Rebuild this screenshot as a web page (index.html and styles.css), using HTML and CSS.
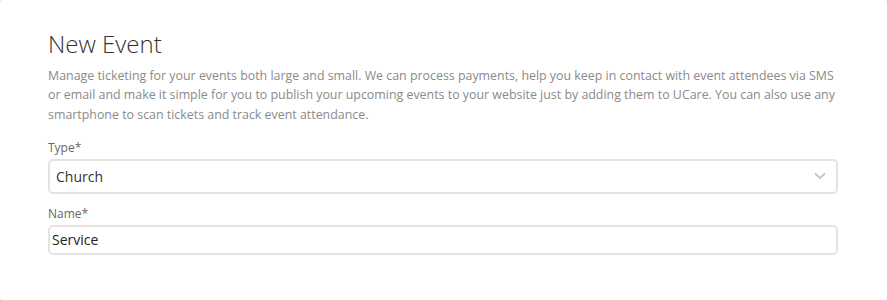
FILE: index.html
```html
<!DOCTYPE html>
<html>
<head>
<meta charset="utf-8">
<link rel="stylesheet" href="styles.css">
</head>
<body>
<div class="card">
  <h1 class="title">New Event</h1>
  <p class="desc">Manage ticketing for your events both large and small. We can process payments, help you keep in contact with event attendees via SMS or email and make it simple for you to publish your upcoming events to your website just by adding them to UCare. You can also use any smartphone to scan tickets and track event attendance.</p>
  <div class="field">
    <label class="label">Type*</label>
    <div class="select">
      <span class="value">Church</span>
      <svg class="chev" width="12" height="8" viewBox="0 0 12 8"><path d="M1 1.5 L6 6 L11 1.5" fill="none" stroke="#c4c4c4" stroke-width="1.8"/></svg>
    </div>
  </div>
  <div class="field">
    <label class="label">Name*</label>
    <div class="input">Service</div>
  </div>
</div>
</body>
</html>
```
FILE: styles.css
```css
html, body {
  margin: 0;
  padding: 0;
  background: #eeeeee;
}
body {
  font-family: "Open Sans", "Noto Sans", sans-serif;
}
.card {
  background: #fff;
  border-radius: 4px;
  height: 300px;
  box-sizing: border-box;
  padding: 28px 49px 0 48px;
}
.title {
  margin: 0;
  font-weight: 300;
  font-size: 24px;
  line-height: 32px;
  color: #333;
}
.desc {
  margin: 6px 0 0;
  font-size: 12.4px;
  line-height: 19.3px;
  color: #8a8a8a;
}
.field {
  margin-top: 16px;
}
.field + .field {
  margin-top: 12px;
}
.label {
  display: block;
  font-size: 12px;
  line-height: 16px;
  color: #666;
  margin-bottom: 3px;
}
.select {
  height: 35px;
  box-sizing: border-box;
  border: 2px solid #e3e3e3;
  border-radius: 5px;
  display: flex;
  align-items: center;
  justify-content: space-between;
  padding: 0 10px 0 6px;
  font-size: 14px;
  color: #333;
}
.input {
  height: 30px;
  box-sizing: border-box;
  border: 2px solid #e3e3e3;
  border-radius: 5px;
  display: flex;
  align-items: center;
  padding: 0 2px;
  font-size: 14px;
  color: #222;
}
```
